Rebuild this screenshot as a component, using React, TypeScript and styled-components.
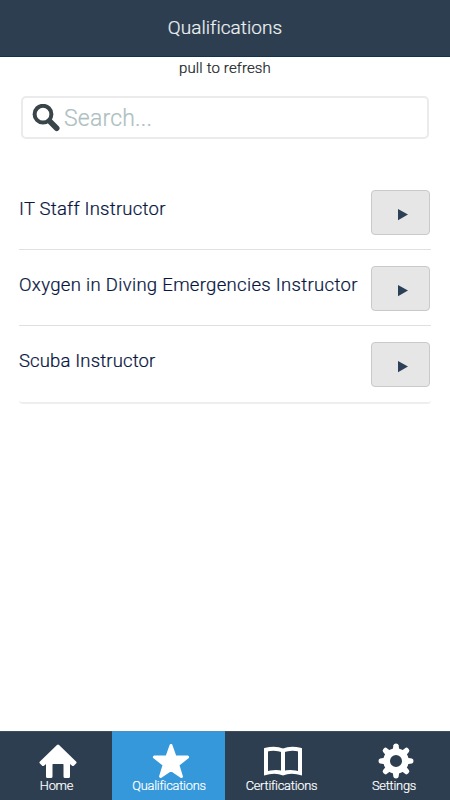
import React from "react";
import styled, { createGlobalStyle } from "styled-components";

const GlobalStyle = createGlobalStyle`
  * { box-sizing: border-box; }
  body { margin: 0; background: #fff; font-family: Roboto, "Liberation Sans", sans-serif; }
`;

const Screen = styled.div`
  display: flex;
  flex-direction: column;
  height: 800px;
  width: 450px;
  overflow: hidden;
  background: #fff;
  -webkit-text-stroke: 0.22px currentColor;
`;

const Header = styled.header`
  height: 57px;
  flex: none;
  background: #2d3e50;
  border-bottom: 1px solid #13304f;
  color: #ecf0f1;
  font-size: 19px;
  font-weight: 300;
  line-height: 55px;
  letter-spacing: 0.06px;
  text-align: center;
`;

const PullHint = styled.div`
  height: 39px;
  flex: none;
  font-size: 15px;
  font-weight: 300;
  line-height: 23px;
  letter-spacing: 0.14px;
  text-align: center;
  color: #1c2629;
`;

const SearchBox = styled.label`
  display: flex;
  align-items: center;
  flex: none;
  height: 43px;
  margin: 0 21px;
  padding-left: 9px;
  border: 2px solid #ebebeb;
  border-radius: 5px;
`;

const SearchInput = styled.input`
  flex: 1;
  min-width: 0;
  margin-left: 4px;
  padding: 1px 0 0;
  border: 0;
  outline: 0;
  background: transparent;
  font-family: inherit;
  font-size: 23px;
  font-weight: 300;
  letter-spacing: 0.2px;
  &::placeholder { color: #adc0c1; opacity: 1; }
`;

const List = styled.ul`
  flex: 1;
  margin: 35px 19px 0;
  padding: 0;
  list-style: none;
`;

const Row = styled.li<{ $last?: boolean }>`
  display: flex;
  justify-content: space-between;
  height: ${(p) => (p.$last ? "78px" : "76px")};
  padding: 16px 1px 0 0;
  border-bottom: ${(p) => (p.$last ? "2px solid #eeeeee" : "1px solid #e0e0e0")};
  border-radius: ${(p) => (p.$last ? "0 0 4px 4px" : "0")};
`;

const RowTitle = styled.span<{ $tracking: number }>`
  font-size: 18.5px;
  font-weight: 300;
  line-height: 39px;
  letter-spacing: ${(p) => p.$tracking}px;
  white-space: nowrap;
  color: #08163f;
`;

const OpenButton = styled.button`
  display: flex;
  align-items: center;
  justify-content: center;
  width: 59px;
  height: 45px;
  padding: 4px 0 0 4px;
  border: 1px solid #c9c9c9;
  border-radius: 4px;
  background: #e6e6e6;
`;

const TabBar = styled.nav`
  display: grid;
  grid-template-columns: 112px 113px 112px 113px;
  height: 69px;
  flex: none;
`;

const Tab = styled.a<{ $active?: boolean }>`
  display: flex;
  flex-direction: column;
  align-items: center;
  padding-top: 11px;
  background: ${(p) => (p.$active ? "#3498db" : "#2d3e50")};
  border-top: 1px solid ${(p) => (p.$active ? "#4a92c4" : "#3d4d5d")};
  color: #fff;
`;

const TabIcon = styled.svg`
  display: block;
  width: 38px;
  height: 37px;
  flex: none;
  overflow: visible;
  margin-left: 4px;
`;

const TabLabel = styled.span`
  margin: -3px 0 0 1px;
  font-size: 12.8px;
  font-weight: 300;
  line-height: 17px;
  letter-spacing: -0.22px;
`;

const HomeIcon = () => (
  <TabIcon viewBox="0 0 38 37">
    <path fill="#fff" stroke="#fff" strokeWidth="3" strokeLinejoin="round" d="M19 3 L36 19.5 34 21.5 31 19 29.5 20 V33.5 H26 V21.5 Q26 19.5 24 19.5 H14 Q12 19.5 12 21.5 V33.5 H8.5 V20 L7 19 4 21.5 2 19.5Z" />
  </TabIcon>
);

const StarIcon = () => (
  <TabIcon viewBox="0 0 38 37">
    <path fill="#fff" stroke="#fff" strokeWidth="3" strokeLinejoin="round" d="M19 2.5 L23 13.8 35.6 14.1 25.8 21.8 29.4 33.5 19 26.5 8.6 33.5 12.2 21.8 2.4 14.1 15 13.8Z" />
  </TabIcon>
);

const BookIcon = () => (
  <TabIcon viewBox="0 0 38 37">
    <path fill="none" stroke="#fff" strokeWidth="4" d="M2 31 V6.8 Q11 4.5 19 7.5 Q27 4.5 36 6.8 V31 M19 7 V30" />
    <path fill="#fff" d="M0 32.5 V29 Q11 25.5 19 28 Q27 25.5 38 29 V32.5 Q27 29 19 32.5 Q11 29 0 32.5Z" />
  </TabIcon>
);

const GearIcon = () => (
  <TabIcon viewBox="0 0 38 37">
    <g transform="translate(19 18)">
      <circle r="9.4" fill="none" stroke="#fff" strokeWidth="6.8" />
      {[0, 45, 90, 135, 180, 225, 270, 315].map((angle) => (
        <path key={angle} transform={`rotate(${angle})`} fill="#fff" d="M-3.3 -11 L-2.6 -15.8 Q-2.3 -17.5 0 -17.5 Q2.3 -17.5 2.6 -15.8 L3.3 -11Z" />
      ))}
    </g>
  </TabIcon>
);

const SearchIcon = () => (
  <svg width="28" height="28" viewBox="0 0 28 28">
    <circle cx="11" cy="10.2" r="8.4" fill="none" stroke="#394548" strokeWidth="4" />
    <path d="M17.5 17 L24.7 24.2" stroke="#394548" strokeWidth="5.6" strokeLinecap="round" />
  </svg>
);

const PlayIcon = () => (
  <svg width="10" height="12" viewBox="0 0 10 12">
    <path d="M0 0 L10 5.6 0 11.2Z" fill="#2c4058" />
  </svg>
);

const qualifications = [
  { title: "IT Staff Instructor", tracking: 0.23 },
  { title: "Oxygen in Diving Emergencies Instructor", tracking: 0.32 },
  { title: "Scuba Instructor", tracking: 0.15 },
];

const tabs = [
  { label: "Home", Icon: HomeIcon },
  { label: "Qualifications", Icon: StarIcon },
  { label: "Certifications", Icon: BookIcon },
  { label: "Settings", Icon: GearIcon },
];

export default function App() {
  return (
    <Screen>
      <GlobalStyle />
      <Header>Qualifications</Header>
      <PullHint>pull to refresh</PullHint>
      <SearchBox>
        <SearchIcon />
        <SearchInput placeholder="Search..." />
      </SearchBox>
      <List>
        {qualifications.map(({ title, tracking }, i) => (
          <Row key={title} $last={i === qualifications.length - 1}>
            <RowTitle $tracking={tracking}>{title}</RowTitle>
            <OpenButton aria-label={title}>
              <PlayIcon />
            </OpenButton>
          </Row>
        ))}
      </List>
      <TabBar>
        {tabs.map(({ label, Icon }) => (
          <Tab key={label} $active={label === "Qualifications"}>
            <Icon />
            <TabLabel>{label}</TabLabel>
          </Tab>
        ))}
      </TabBar>
    </Screen>
  );
}
